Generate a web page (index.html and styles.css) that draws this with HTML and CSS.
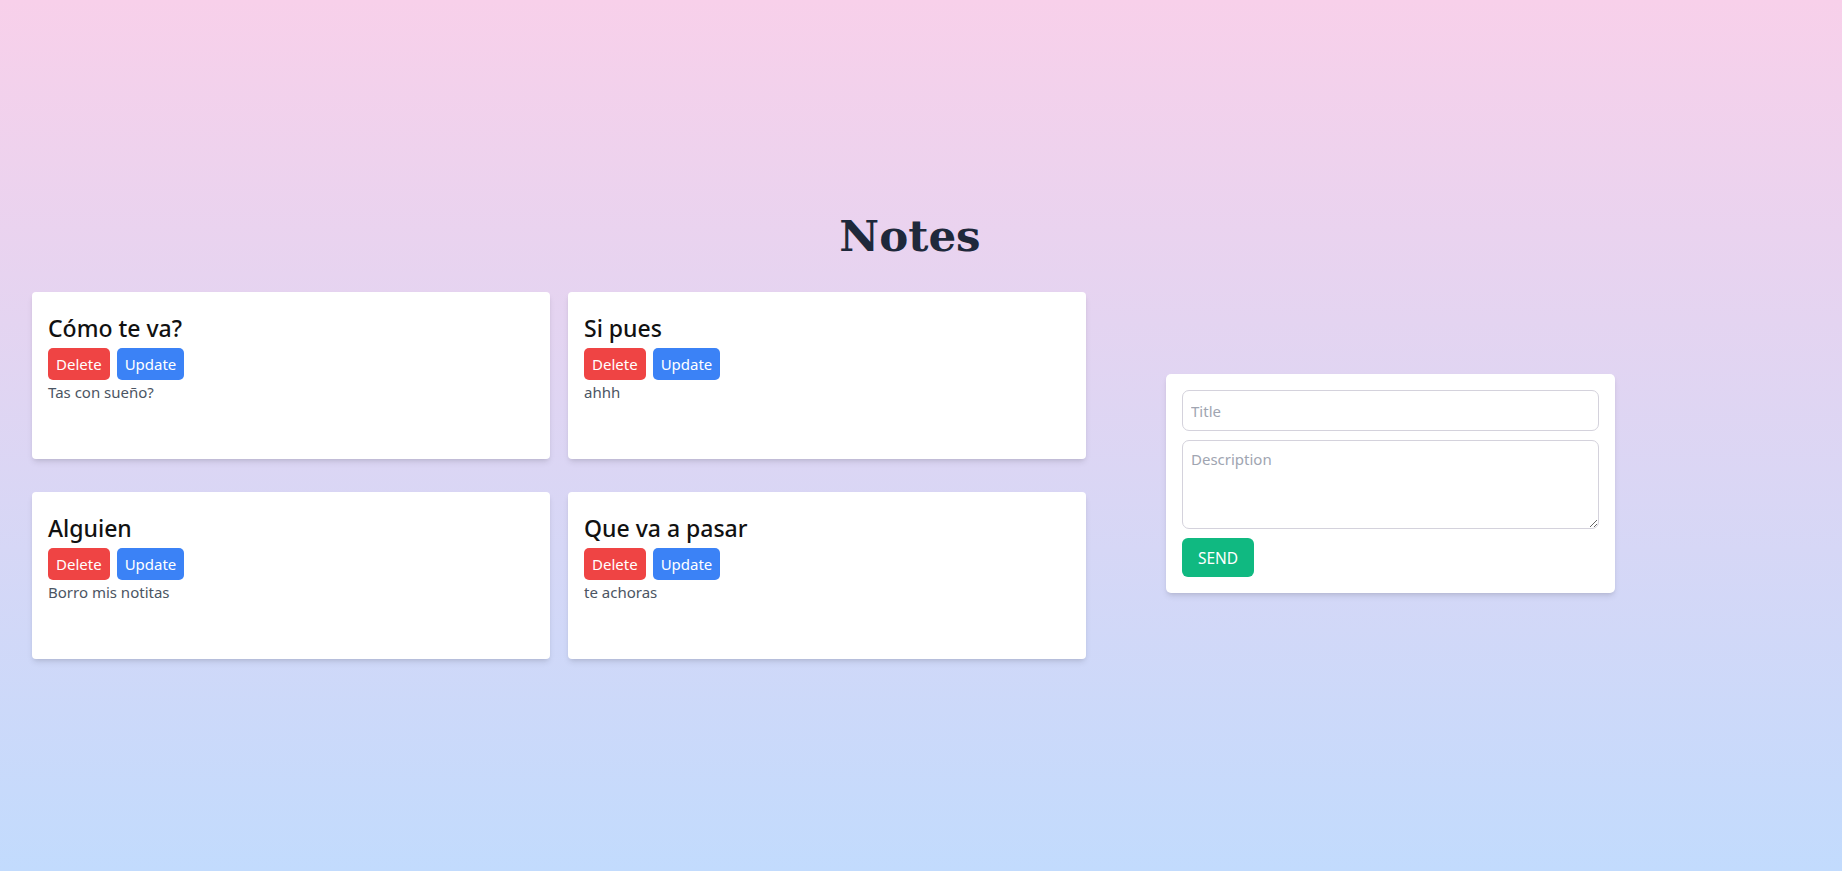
FILE: index.html
```html
<!DOCTYPE html>
<html lang="es">
<head>
<meta charset="utf-8">
<title>Notes</title>
<link rel="stylesheet" href="styles.css">
</head>
<body>
<div class="page">
  <h1 class="heading">Notes</h1>
  <div class="content">
    <div class="notes">
      <div class="card">
        <h2 class="card-title">Cómo te va?</h2>
        <div class="actions">
          <button class="btn btn-delete">Delete</button>
          <button class="btn btn-update">Update</button>
        </div>
        <p class="card-desc">Tas con sueño?</p>
      </div>
      <div class="card">
        <h2 class="card-title">Si pues</h2>
        <div class="actions">
          <button class="btn btn-delete">Delete</button>
          <button class="btn btn-update">Update</button>
        </div>
        <p class="card-desc">ahhh</p>
      </div>
      <div class="card">
        <h2 class="card-title">Alguien</h2>
        <div class="actions">
          <button class="btn btn-delete">Delete</button>
          <button class="btn btn-update">Update</button>
        </div>
        <p class="card-desc">Borro mis notitas</p>
      </div>
      <div class="card">
        <h2 class="card-title">Que va a pasar</h2>
        <div class="actions">
          <button class="btn btn-delete">Delete</button>
          <button class="btn btn-update">Update</button>
        </div>
        <p class="card-desc">te achoras</p>
      </div>
    </div>
    <form class="note-form">
      <input class="field field-input" type="text" placeholder="Title">
      <textarea class="field field-area" placeholder="Description"></textarea>
      <button class="send" type="button">SEND</button>
    </form>
  </div>
</div>
</body>
</html>
```

FILE: styles.css
```css
* { box-sizing: border-box; }

html, body {
  margin: 0;
  padding: 0;
}

body {
  min-height: 100vh;
  background: linear-gradient(to bottom, #f8d0ea, #c2dbfd);
  font-family: "Noto Sans", "Open Sans", sans-serif;
  color: #111;
}

.page {
  min-height: 100vh;
  display: flex;
  flex-direction: column;
  justify-content: center;
}

.heading {
  margin: 0 0 32px;
  padding-right: 22px;
  text-align: center;
  font-family: "DejaVu Serif", serif;
  font-weight: bold;
  font-size: 43.6px;
  line-height: 48px;
  color: #1e293b;
}

.content {
  display: flex;
  align-items: center;
  padding-left: 32px;
}

.notes {
  display: grid;
  grid-template-columns: 518px 518px;
  grid-auto-rows: 167px;
  column-gap: 18px;
  row-gap: 33px;
}

.card {
  background: #fff;
  border-radius: 4px;
  box-shadow: 0 4px 6px -1px rgba(0,0,0,0.1), 0 2px 4px -2px rgba(0,0,0,0.1);
  padding: 16px;
}

.card-title {
  margin: 0;
  font-size: 23px;
  line-height: 40px;
  font-weight: 500;
  color: #111;
}

.actions {
  display: flex;
  gap: 7px;
}

.btn {
  border: 0;
  border-radius: 5px;
  padding: 4px 8px;
  font-family: inherit;
  font-size: 15px;
  line-height: 24px;
  color: #fff;
}

.btn-delete { background: #ef4444; }
.btn-update { background: #3b82f6; }

.card-desc {
  margin: 0;
  font-size: 15px;
  line-height: 24px;
  color: #4b5563;
}

.note-form {
  margin-left: 80px;
  margin-top: 16px;
  width: 449px;
  background: #fff;
  border-radius: 5px;
  box-shadow: 0 4px 6px -1px rgba(0,0,0,0.1), 0 2px 4px -2px rgba(0,0,0,0.1);
  padding: 16px;
  display: flex;
  flex-direction: column;
  align-items: flex-start;
  gap: 9px;
}

.field {
  width: 100%;
  border: 1px solid #d4d2dc;
  border-radius: 7px;
  font-family: inherit;
  font-size: 15px;
  color: #111;
  background: #fff;
  outline: none;
}

.field::placeholder { color: #a0a5b1; }

.field-input {
  height: 41px;
  padding: 0 8px;
}

.field-area {
  height: 89px;
  padding: 6px 8px;
  line-height: 24px;
  resize: vertical;
}

.send {
  width: 72px;
  height: 39px;
  border: 0;
  border-radius: 6px;
  background: #10b981;
  color: #fff;
  font-family: inherit;
  font-size: 15.5px;
}
```
